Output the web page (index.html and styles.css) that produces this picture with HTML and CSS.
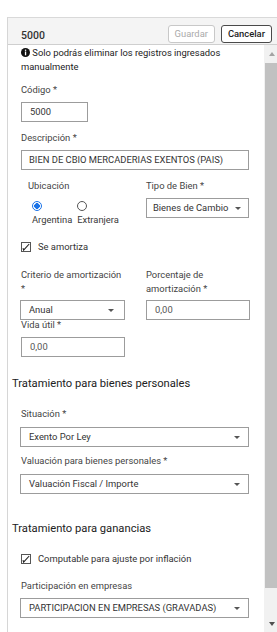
FILE: index.html
```html
<!DOCTYPE html>
<html lang="es">
<head>
    <meta charset="UTF-8">
    <meta name="viewport" content="width=device-width, initial-scale=1.0">
    <title>Bien 5000</title>
    <link rel="stylesheet" href="styles.css">
</head>
<body>
    <div class="panel">
        <!-- cabecera con acciones -->
        <div class="panel-header">
            <span class="panel-title">5000</span>
            <div class="actions">
                <button class="btn" disabled>Guardar</button>
                <button class="btn btn-dark">Cancelar</button>
            </div>
        </div>

        <div class="panel-body">
            <div class="form">
                <p class="note">
                    <svg class="info-icon" width="9" height="9" viewBox="0 0 9 9">
                        <circle cx="4.5" cy="4.5" r="4.5" fill="#111"/>
                        <rect x="3.9" y="1.6" width="1.3" height="1.3" fill="#fff"/>
                        <rect x="3.9" y="3.5" width="1.3" height="3.8" fill="#fff"/>
                    </svg>
                    Solo podrás eliminar los registros ingresados manualmente
                </p>

                <div class="field">
                    <label class="label">Código *</label>
                    <div class="input input-code">5000</div>
                </div>

                <div class="field">
                    <label class="label">Descripción *</label>
                    <div class="input input-wide">BIEN DE CBIO MERCADERIAS EXENTOS (PAIS)</div>
                </div>

                <div class="row row-ubicacion">
                    <div class="col">
                        <label class="label label-ubicacion">Ubicación</label>
                        <div class="radios">
                            <div class="radio-option">
                                <span class="radio checked"></span>
                                <span>Argentina</span>
                            </div>
                            <div class="radio-option">
                                <span class="radio"></span>
                                <span>Extranjera</span>
                            </div>
                        </div>
                    </div>
                    <div class="col">
                        <label class="label">Tipo de Bien *</label>
                        <div class="select select-tipo"><span>Bienes de Cambio</span><i class="caret"></i></div>
                    </div>
                </div>

                <div class="check-row check-amortiza">
                    <svg class="checkbox" width="10" height="10" viewBox="0 0 10 10">
                        <rect x="0.5" y="0.5" width="9" height="9" fill="#fff" stroke="#555"/>
                        <path d="M2 6.2 L2.6 8.2 L8.2 2" fill="none" stroke="#222" stroke-width="1.1"/>
                    </svg>
                    <span>Se amortiza</span>
                </div>

                <div class="row row-amortizacion">
                    <div class="col">
                        <label class="label label-two">Criterio de amortización *</label>
                        <div class="select select-half"><span>Anual</span><i class="caret"></i></div>
                    </div>
                    <div class="col">
                        <label class="label label-two">Porcentaje de amortización *</label>
                        <div class="input input-half muted">0,00</div>
                    </div>
                </div>

                <div class="field field-vida">
                    <label class="label">Vida útil *</label>
                    <div class="input input-half muted">0,00</div>
                </div>

                <h3 class="section-title title-personales">Tratamiento para bienes personales</h3>

                <div class="field field-situacion">
                    <label class="label">Situación *</label>
                    <div class="select select-wide"><span>Exento Por Ley</span><i class="caret"></i></div>
                </div>

                <div class="field field-valuacion">
                    <label class="label">Valuación para bienes personales *</label>
                    <div class="select select-wide"><span>Valuación Fiscal / Importe</span><i class="caret"></i></div>
                </div>

                <h3 class="section-title title-ganancias">Tratamiento para ganancias</h3>

                <div class="check-row check-inflacion">
                    <svg class="checkbox" width="10" height="10" viewBox="0 0 10 10">
                        <rect x="0.5" y="0.5" width="9" height="9" fill="#fff" stroke="#555"/>
                        <path d="M2 6.2 L2.6 8.2 L8.2 2" fill="none" stroke="#222" stroke-width="1.1"/>
                    </svg>
                    <span>Computable para ajuste por inflación</span>
                </div>

                <div class="field field-participacion">
                    <label class="label">Participación en empresas</label>
                    <div class="select select-wide"><span>PARTICIPACION EN EMPRESAS (GRAVADAS)</span><i class="caret"></i></div>
                </div>
            </div>

            <!-- barra de desplazamiento -->
            <div class="scrollbar">
                <span class="scroll-btn"><i class="arrow-up"></i></span>
                <span class="scroll-thumb"></span>
                <span class="scroll-space"></span>
                <span class="scroll-btn"><i class="arrow-down"></i></span>
            </div>
        </div>
    </div>
</body>
</html>
```

FILE: styles.css
```css
body {
    margin: 0;
    font-family: Roboto, "Liberation Sans", sans-serif;
    font-size: 9.4px;
    color: #3a3a3a;
    background: #fff;
    overflow: hidden;
    width: 277px;
    height: 632px;
}
.panel {
    margin: 17px 0 0 7px;
    width: 272px;
    height: 615px;
    border-left: 1px solid #d6d6d6;
    border-top: 1px solid #d9d9d9;
    box-sizing: border-box;
    display: flex;
    flex-direction: column;
}
.panel-header {
    display: flex;
    justify-content: space-between;
    align-items: center;
    height: 27px;
    padding: 5px 7px 0 13px;
    box-sizing: border-box;
    background-color: #f4f4f4;
    border-bottom: 1px solid #cfcfcf;
}
.panel-title {
    font-size: 10.5px;
    font-weight: 500;
    color: #333;
    padding-top: 3px;
}
.actions {
    display: flex;
    gap: 6px;
}
.btn {
    height: 18px;
    padding: 0 6px;
    font-family: inherit;
    font-size: 9.4px;
    background: #fff;
    border: 1px solid #c8c8c8;
    border-radius: 3px;
    color: #aaa;
}
.btn-dark {
    border-color: #4a4a4a;
    color: #222;
    font-weight: 500;
}
.panel-body {
    flex: 1;
    display: flex;
    min-height: 0;
}
.form {
    flex: 1;
    padding-left: 13px;
}
.note {
    margin: 1px 0 0;
    line-height: 14px;
    color: #222;
    padding-right: 20px;
}
.info-icon {
    vertical-align: -1px;
}
.label {
    display: block;
    line-height: 14px;
    color: #444;
    margin-bottom: 5px;
}
.field {
    margin-top: 9px;
}
.input,
.select {
    height: 20px;
    box-sizing: border-box;
    border: 1px solid #9c9c9c;
    line-height: 18px;
    padding: 0 8px;
    color: #333;
    background: #fff;
    white-space: nowrap;
}
.input-code {
    width: 67px;
}
.input-wide {
    width: 228px;
    padding-left: 7px;
}
.select {
    display: flex;
    justify-content: space-between;
    align-items: center;
}
.select-wide {
    width: 229px;
    margin-left: -1px;
}
.select-tipo {
    width: 103px;
    padding: 0 7px 0 6px;
}
.select-half {
    width: 105px;
    margin-left: -1px;
    padding-right: 10px;
}
.input-half {
    width: 104px;
}
.muted {
    color: #555;
}
.caret {
    width: 0;
    height: 0;
    border-left: 3px solid transparent;
    border-right: 3px solid transparent;
    border-top: 3px solid #555;
}
.row {
    display: grid;
    grid-template-columns: 105px 103px;
    column-gap: 20px;
}
.row-ubicacion {
    margin-top: 9px;
}
.label-ubicacion {
    padding-left: 7px;
    margin-bottom: 8px;
}
.radios {
    display: flex;
    gap: 5px;
    padding-left: 11px;
}
.radio-option {
    display: flex;
    flex-direction: column;
    align-items: flex-start;
    gap: 2px;
    line-height: 14px;
}
.radio {
    width: 10px;
    height: 10px;
    box-sizing: border-box;
    border: 1px solid #555;
    border-radius: 50%;
    background: #fff;
}
.radio.checked {
    border-color: #1a73e8;
    background: radial-gradient(circle, #1a73e8 0 2.6px, #fff 3px);
}
.check-row {
    display: flex;
    align-items: center;
    gap: 7px;
    line-height: 14px;
    color: #333;
}
.check-amortiza {
    margin-top: 13px;
}
.row-amortizacion {
    margin-top: 14px;
}
.label-two {
    height: 28px;
    margin-bottom: 4px;
}
.field-vida {
    margin-top: -2px;
}
.section-title {
    margin: 0 0 0 -9px;
    font-size: 11.2px;
    font-weight: normal;
    line-height: 16px;
    color: #222;
}
.title-personales {
    margin-top: 19px;
}
.field-situacion {
    margin-top: 15px;
}
.field-situacion .label,
.field-valuacion .label {
    margin-bottom: 6px;
}
.field-valuacion {
    margin-top: 7px;
}
.title-ganancias {
    margin-top: 27px;
}
.check-inflacion {
    margin-top: 15px;
}
.field-participacion {
    margin-top: 13px;
}
.scrollbar {
    width: 15px;
    display: flex;
    flex-direction: column;
    background-color: #f1f1f1;
}
.scroll-btn {
    height: 17px;
    display: flex;
    align-items: center;
    justify-content: center;
}
.arrow-up {
    border-left: 3.5px solid transparent;
    border-right: 3.5px solid transparent;
    border-bottom: 4px solid #a3a3a3;
}
.arrow-down {
    border-left: 3.5px solid transparent;
    border-right: 3.5px solid transparent;
    border-top: 4px solid #505050;
}
.scroll-thumb {
    height: 525px;
    margin: 1px 0 0 1px;
    background-color: #c1c1c1;
}
.scroll-space {
    flex: 1;
}
```
